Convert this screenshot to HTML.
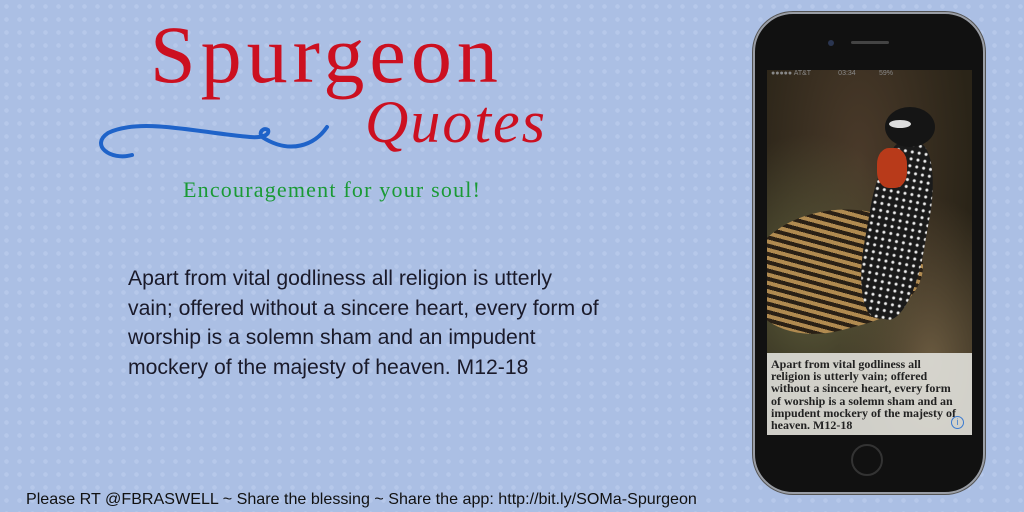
<!DOCTYPE html>
<html><head><style>
body{margin:0;width:1024px;height:512px;overflow:hidden;background:#abbfe4;position:relative;font-family:"Liberation Sans",sans-serif;
background-image:radial-gradient(circle,#b6c8ea 2px,transparent 2.5px);background-size:13px 13px;}
.a{position:absolute;white-space:nowrap}
</style></head><body>
<div class="a" style="left:150px;top:8px;font-family:'Liberation Serif',serif;font-size:82px;color:#cc1020;letter-spacing:5px">Spurgeon</div>
<div class="a" style="left:365px;top:88px;font-family:'Liberation Serif',serif;font-style:italic;font-size:60px;color:#cc1020;letter-spacing:2px">Quotes</div>
<svg class="a" style="left:90px;top:115px" width="250" height="50"><path d="M42,40 C20,46 0,30 18,18 C50,2 110,18 160,22 C172,23 180,20 178,15 C174,12 168,17 172,22 C200,40 225,30 237,12" fill="none" stroke="#1f63c9" stroke-width="4" stroke-linecap="round"/></svg>
<div class="a" style="left:183px;top:177px;font-family:'Liberation Serif',serif;font-size:22px;letter-spacing:1.2px;color:#1a9a35">Encouragement for your soul!</div>
<div class="a" style="left:128px;top:264px;font-size:21.2px;line-height:29.5px;color:#1a1a2a">Apart from vital godliness all religion is utterly<br>vain; offered without a sincere heart, every form of<br>worship is a solemn sham and an impudent<br>mockery of the majesty of heaven. M12-18</div>
<div class="a" style="left:26px;top:490px;font-size:16.1px;color:#111">Please RT @FBRASWELL ~ Share the blessing ~ Share the app: http://bit.ly/SOMa-Spurgeon</div>
<div class="a" style="left:753px;top:12px;width:228px;height:478px;border-radius:40px;background:#111;border:2px solid #9a9ea6;box-shadow:0 0 0 1px #555"></div>
<div class="a" style="left:828px;top:40px;width:6px;height:6px;border-radius:50%;background:#2a3550"></div>
<div class="a" style="left:851px;top:41px;width:38px;height:3px;border-radius:2px;background:#444"></div>
<div class="a" style="left:851px;top:444px;width:32px;height:32px;border-radius:50%;border:2px solid #333;box-sizing:border-box"></div>
<div class="a" style="left:767px;top:70px;width:205px;height:365px;overflow:hidden;background:radial-gradient(ellipse at 45% 25%,#4a3a2a,#2a2418 70%);">
<div class="a" style="left:0;top:0;width:205px;height:365px;background:radial-gradient(ellipse at 20% 60%,#5a5a3a 0,transparent 50%),radial-gradient(ellipse at 80% 80%,#6a5a40 0,transparent 40%)"></div>
<div class="a" style="left:-20px;top:140px;width:175px;height:120px;border-radius:50% 60% 45% 50%;background:repeating-linear-gradient(30deg,#b08a50 0 4px,#2a2015 4px 8px);transform:rotate(-15deg)"></div>
<div class="a" style="left:100px;top:70px;width:60px;height:180px;border-radius:40%;background:radial-gradient(circle,#eee 1px,#1a1a1a 2px);background-size:7px 7px;transform:rotate(10deg)"></div>
<div class="a" style="left:110px;top:78px;width:30px;height:40px;border-radius:40%;background:#b83a1a"></div>
<div class="a" style="left:118px;top:37px;width:50px;height:40px;border-radius:50%;background:#151515"></div>
<div class="a" style="left:122px;top:50px;width:22px;height:8px;border-radius:50%;background:#ddd"></div>
<div class="a" style="left:0;top:0;width:205px;height:10px;font-size:7px;color:#888;padding-left:4px">●●●●● AT&amp;T &nbsp;&nbsp;&nbsp;&nbsp;&nbsp;&nbsp;&nbsp;&nbsp;&nbsp;&nbsp;&nbsp;&nbsp;&nbsp;03:34 &nbsp;&nbsp;&nbsp;&nbsp;&nbsp;&nbsp;&nbsp;&nbsp;&nbsp;&nbsp;&nbsp;59%</div>
<div class="a" style="left:0;top:283px;width:205px;height:82px;background:rgba(225,225,220,.9);font-family:'Liberation Serif',serif;font-weight:bold;font-size:12px;line-height:12.2px;color:#222;padding:5px 4px;box-sizing:border-box;white-space:normal">Apart from vital godliness all<br>religion is utterly vain; offered<br>without a sincere heart, every form<br>of worship is a solemn sham and an<br>impudent mockery of the majesty of<br>heaven. M12-18</div>
<div class="a" style="left:184px;top:346px;width:11px;height:11px;border-radius:50%;border:1px solid #3a7ad0;font-size:9px;color:#3a7ad0;text-align:center;line-height:11px">i</div>
</div>
</body></html>
